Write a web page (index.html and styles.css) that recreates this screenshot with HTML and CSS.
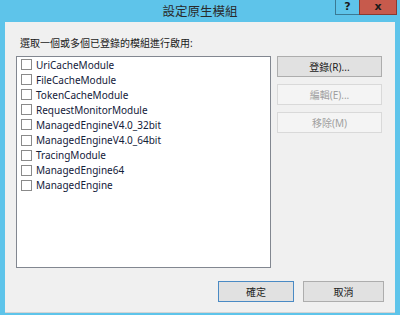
FILE: index.html
```html
<!DOCTYPE html>
<html>
<head>
    <title>設定原生模組</title>
    <link rel="stylesheet" href="styles.css">
</head>
<body>
    <div class="window">
        <div class="titlebar">
            <div></div>
            <div class="title">設定原生模組</div>
            <div class="caption">
                <div class="cap_btn help">?</div>
                <div class="cap_btn close">x</div>
            </div>
        </div>
        <div class="client">
            <div class="label">選取一個或多個已登錄的模組進行啟用:</div>
            <div class="main">
                <div class="listbox">
                    <div class="item"><span class="box"></span>UriCacheModule</div>
                    <div class="item"><span class="box"></span>FileCacheModule</div>
                    <div class="item"><span class="box"></span>TokenCacheModule</div>
                    <div class="item"><span class="box"></span>RequestMonitorModule</div>
                    <div class="item"><span class="box"></span>ManagedEngineV4.0_32bit</div>
                    <div class="item"><span class="box"></span>ManagedEngineV4.0_64bit</div>
                    <div class="item"><span class="box"></span>TracingModule</div>
                    <div class="item"><span class="box"></span>ManagedEngine64</div>
                    <div class="item"><span class="box"></span>ManagedEngine</div>
                </div>
                <div class="side">
                    <div class="btn">登錄(R)...</div>
                    <div class="btn disabled">編輯(E)...</div>
                    <div class="btn disabled">移除(M)</div>
                </div>
            </div>
            <div class="bottom">
                <div class="btn ok">確定</div>
                <div class="btn cancel">取消</div>
            </div>
        </div>
    </div>
</body>
</html>
```

FILE: styles.css
```css
body{
    margin: 0;
    background-color: #5ec4ea;
    font-family: "Noto Sans", "Noto Sans CJK TC", sans-serif;
    font-size: 10px;
    color: #1a1a1a;
}
.window{
    width: 400px;
    height: 315px;
    background-color: #5ec4ea;
}
.titlebar{
    height: 22px;
    display: grid;
    grid-template-columns: 1fr auto 1fr;
}
.title{
    font-size: 12.5px;
    line-height: 24px;
    color: #2a2a2a;
}
.caption{
    display: flex;
    justify-content: flex-end;
    align-items: flex-start;
    padding-right: 3px;
}
.cap_btn{
    height: 15px;
    line-height: 13px;
    text-align: center;
    font-family: "DejaVu Sans", sans-serif;
    font-weight: bold;
    font-size: 11px;
    box-sizing: border-box;
    border: 1px solid #3a7a94;
    border-top: none;
}
.help{
    width: 24px;
    color: #1a1a1a;
    border-right: none;
}
.close{
    width: 38px;
    background-color: #c75a4c;
    color: #1a1a1a;
    border-color: #8a3a30;
}
.client{
    margin: 0 5px;
    height: 291px;
    box-sizing: border-box;
    background-color: #f0f0f0;
    border-bottom: 1px solid #d4d4d4;
    padding: 14px 11px 0 11px;
}
.label{
    line-height: 14px;
    padding-left: 4px;
}
.main{
    display: flex;
    gap: 6px;
    margin-top: 6px;
}
.listbox{
    width: 255px;
    height: 212px;
    box-sizing: border-box;
    background-color: #fff;
    border: 1px solid #828790;
    padding: 0 0 0 4px;
}
.item{
    height: 15.1px;
    display: flex;
    align-items: center;
    color: #13203a;
}
.box{
    width: 9px;
    height: 9px;
    border: 1px solid #8a8a8a;
    background-color: #fff;
    margin-right: 4px;
}
.side{
    display: flex;
    flex-direction: column;
    gap: 7px;
}
.btn{
    width: 105px;
    height: 21px;
    box-sizing: border-box;
    border: 1px solid #adadad;
    background-color: #e1e1e1;
    text-align: center;
    line-height: 20px;
    color: #222;
}
.disabled{
    background-color: #f4f4f4;
    border-color: #d9d9d9;
    color: #a0a0a0;
}
.bottom{
    display: flex;
    justify-content: flex-end;
    gap: 9px;
    margin-top: 13px;
}
.ok{
    width: 76px;
    border-color: #4a8ac4;
}
.cancel{
    width: 81px;
}
```
